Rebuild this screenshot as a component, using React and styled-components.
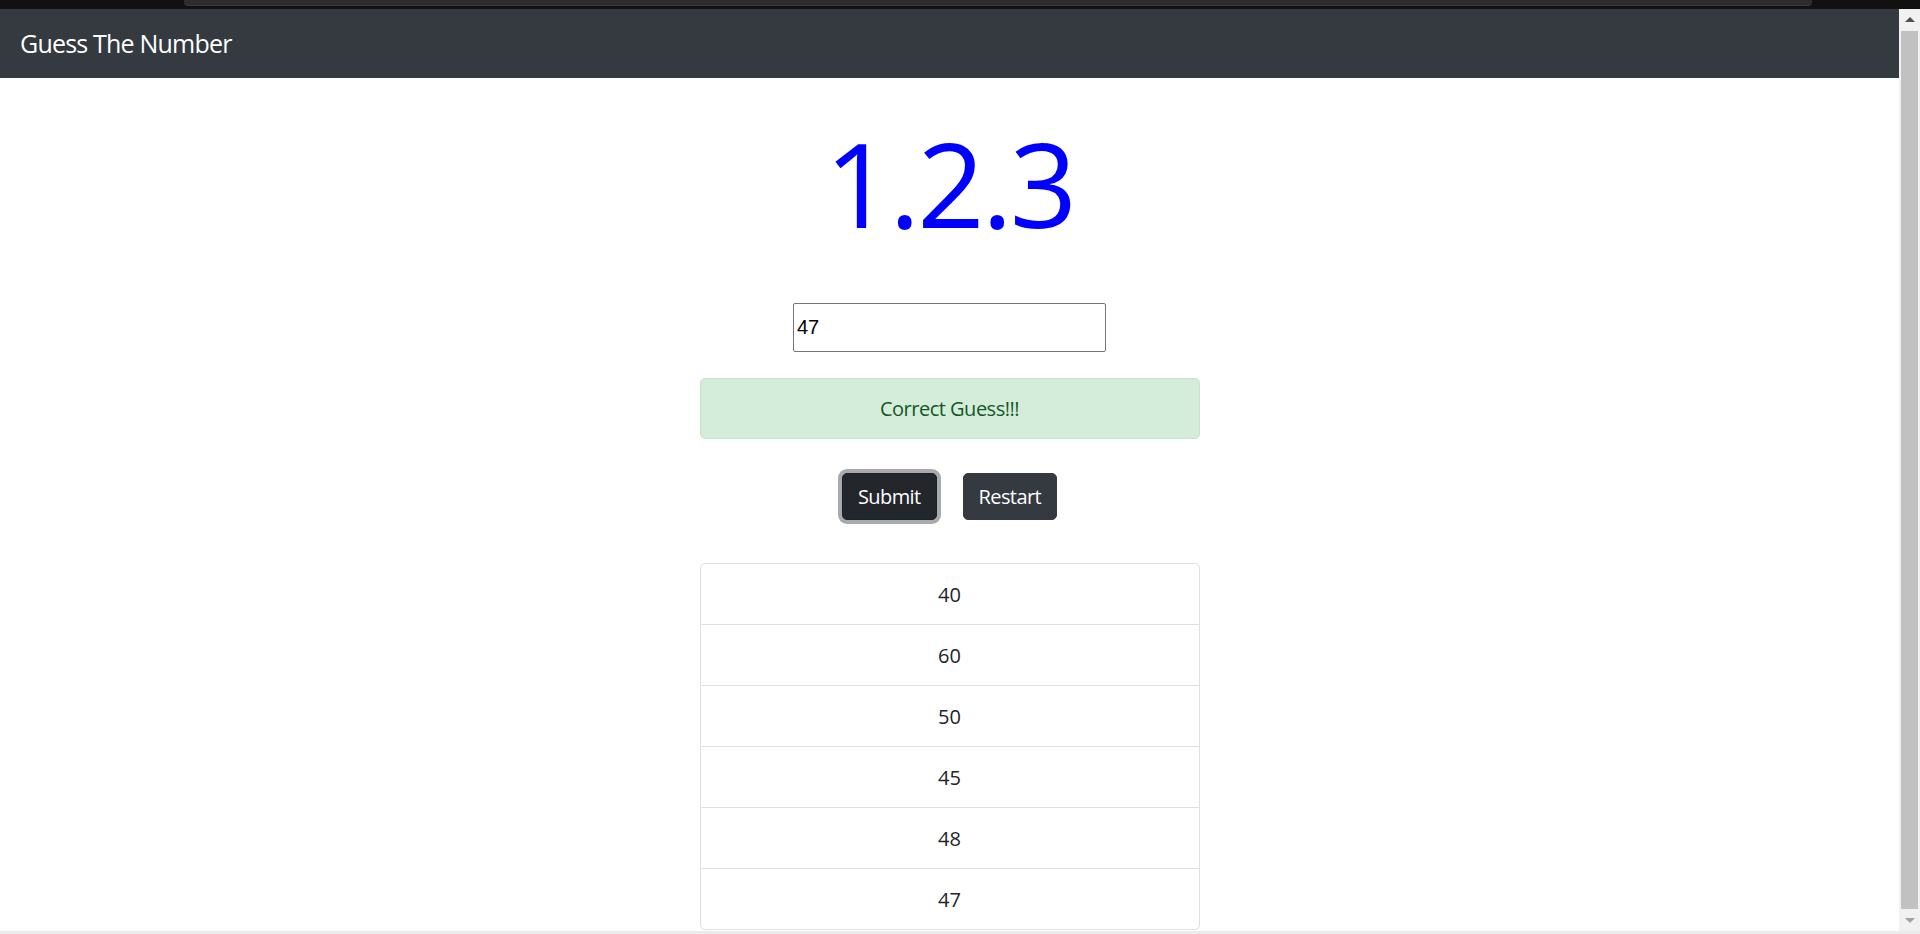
import React, { useState } from "react";
import styled, { createGlobalStyle } from "styled-components";

const GlobalStyle = createGlobalStyle`
  html, body {
    margin: 0;
    padding: 0;
    height: 100%;
    overflow: hidden;
    background: #fff;
  }
  body {
    font-family: "Open Sans", "Noto Sans", sans-serif;
    color: #212529;
  }
  * {
    box-sizing: border-box;
  }
`;

const Shell = styled.div`
  display: flex;
  flex-direction: column;
  height: 100vh;
`;

const WindowStrip = styled.div`
  flex: 0 0 9px;
  background: #111111;
  padding-left: 184px;
  padding-right: 108px;
`;

const TabEdge = styled.div`
  height: 6px;
  background: #2c2c2c;
  border-bottom: 1px solid #3a3a3a;
  border-radius: 0 0 4px 4px;
`;

const Body = styled.div`
  flex: 1;
  display: flex;
  min-height: 0;
`;

const Page = styled.div`
  flex: 1;
  min-width: 0;
  overflow: hidden;
`;

const ScrollRail = styled.div`
  flex: 0 0 21px;
  display: flex;
  flex-direction: column;
  background: #f1f1f1;
`;

const RailButton = styled.div`
  flex: 0 0 21px;
  display: flex;
  align-items: center;
  justify-content: center;
`;

const RailThumb = styled.div`
  flex: 1;
  margin: 1px 2px;
  background: #c1c1c1;
`;

const BottomEdge = styled.div`
  flex: 0 0 3px;
  background: #ebebeb;
`;

const Navbar = styled.nav`
  height: 69px;
  background: #343a40;
  display: flex;
  align-items: center;
  padding: 0 20px;
`;

const Brand = styled.span`
  font-size: 25px;
  line-height: 37px;
  color: #ffffff;
  letter-spacing: -0.8px;
`;

const Main = styled.main`
  display: flex;
  flex-direction: column;
  align-items: center;
`;

const Title = styled.h1`
  margin: 30px 0 0;
  font-size: 118px;
  font-weight: 500;
  line-height: 150px;
  color: #0000ff;
  letter-spacing: -3px;
`;

const GuessInput = styled.input`
  margin-top: 45px;
  width: 313px;
  height: 49px;
  padding: 0 3px;
  border: 1px solid #767676;
  border-radius: 2px;
  font-family: "Liberation Sans", Arial, sans-serif;
  font-size: 20px;
  color: #000;
  outline: none;
`;

const Alert = styled.div`
  margin-top: 26px;
  width: 500px;
  height: 61px;
  display: flex;
  align-items: center;
  justify-content: center;
  background: #d4edda;
  border: 1px solid #c3e6cb;
  border-radius: 5px;
  color: #155724;
  font-size: 20px;
  letter-spacing: -0.5px;
`;

const ButtonRow = styled.div`
  margin-top: 34px;
  display: flex;
  gap: 26px;
`;

const Button = styled.button`
  height: 47px;
  padding: 0 15px;
  border: 1px solid ${(p) => (p.$focused ? "#1d2124" : "#343a40")};
  border-radius: 5px;
  background: ${(p) => (p.$focused ? "#23272b" : "#343a40")};
  box-shadow: ${(p) => (p.$focused ? "0 0 0 4px rgba(82, 88, 93, 0.5)" : "none")};
  color: #ffffff;
  font-family: "Open Sans", "Noto Sans", sans-serif;
  font-size: 20px;
  letter-spacing: -0.6px;
  cursor: pointer;
`;

const GuessList = styled.ul`
  margin: 43px 0 0;
  padding: 0;
  list-style: none;
  width: 500px;
  border: 1px solid #dfdfdf;
  border-radius: 5px;
`;

const GuessItem = styled.li`
  height: 60px;
  display: flex;
  align-items: center;
  justify-content: center;
  font-size: 20px;
  color: #212529;
  & + & {
    border-top: 1px solid #dfdfdf;
    height: 61px;
  }
`;

const Arrow = ({ up, color }) => (
  <svg width="10" height="6" viewBox="0 0 10 6">
    <polygon points={up ? "5,0 10,5 0,5" : "0,0 10,0 5,5"} fill={color} />
  </svg>
);

const App = () => {
  const [value, setValue] = useState("47");
  const guesses = [40, 60, 50, 45, 48, 47];

  return (
    <Shell>
      <GlobalStyle />
      <WindowStrip>
        <TabEdge />
      </WindowStrip>
      <Body>
        <Page>
          <Navbar>
            <Brand>Guess The Number</Brand>
          </Navbar>
          <Main>
            <Title>1.2.3</Title>
            <GuessInput value={value} onChange={(e) => setValue(e.target.value)} />
            <Alert>Correct Guess!!!</Alert>
            <ButtonRow>
              <Button $focused>Submit</Button>
              <Button>Restart</Button>
            </ButtonRow>
            <GuessList>
              {guesses.map((g, i) => (
                <GuessItem key={i}>{g}</GuessItem>
              ))}
            </GuessList>
          </Main>
        </Page>
        <ScrollRail>
          <RailButton>
            <Arrow up color="#505050" />
          </RailButton>
          <RailThumb />
          <RailButton>
            <Arrow color="#a3a3a3" />
          </RailButton>
        </ScrollRail>
      </Body>
      <BottomEdge />
    </Shell>
  );
};

export default App;
